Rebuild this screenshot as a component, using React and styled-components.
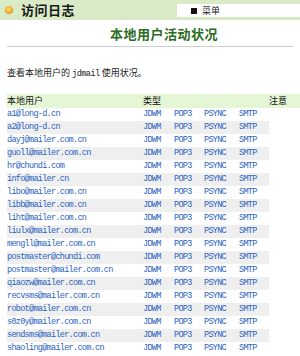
import React from 'react'
import styled, { createGlobalStyle } from 'styled-components'

const users = [
  'a1@long-d.cn',
  'a2@long-d.cn',
  'dayj@mailer.com.cn',
  'guoll@mailer.com.cn',
  'hr@chundi.com',
  'info@mailer.cn',
  'libo@mailer.com.cn',
  'libb@mailer.com.cn',
  'liht@mailer.com.cn',
  'liulx@mailer.com.cn',
  'mengll@mailer.com.cn',
  'postmaster@chundi.com',
  'postmaster@mailer.com.cn',
  'qiaozw@mailer.com.cn',
  'recvsms@mailer.com.cn',
  'robot@mailer.com.cn',
  's0z0y@mailer.com.cn',
  'sendsms@mailer.com.cn',
  'shaoling@mailer.com.cn',
]

const types = ['JDWM', 'POP3', 'PSYNC', 'SMTP']

const App = () => {
  return (
    <>
      <GlobalStyle />
      <TopBar>
        <Brand>
          <Dot />
          访问日志
        </Brand>
        <MenuBox>
          <Square />
          菜单
        </MenuBox>
      </TopBar>

      <Content>
        <Title>本地用户活动状况</Title>
        <Intro>
          查看本地用户的 <Mono>jdmail</Mono> 使用状况。
        </Intro>

        <Table>
          <colgroup>
            <col style={{ width: 136 }} />
            <col style={{ width: 31 }} />
            <col style={{ width: 30 }} />
            <col style={{ width: 35 }} />
            <col style={{ width: 30 }} />
            <col />
          </colgroup>
          <thead>
            <HeadRow>
              <Th>本地用户</Th>
              <Th colSpan={4}>类型</Th>
              <Th>注意</Th>
            </HeadRow>
          </thead>
          <tbody>
            {users.map((u, i) => (
              <Row key={u} $odd={i % 2 === 1}>
                <Cell><Link>{u}</Link></Cell>
                {types.map((t) => (
                  <Cell key={t}><Link>{t}</Link></Cell>
                ))}
                <NoteCell />
              </Row>
            ))}
          </tbody>
        </Table>
      </Content>
    </>
  )
}

export default App


// STYLES ––––––––––––––––––––––––– //

const GlobalStyle = createGlobalStyle`
  html, body {
    margin: 0;
    padding: 0;
    background: #ffffff;
    overflow: hidden;
  }
  body {
    font-family: "Noto Sans CJK SC", "DejaVu Sans", sans-serif;
    font-size: 9px;
    color: #111;
  }
`

const TopBar = styled.div`
  height: 20px;
  background: #d9ebc6;
  display: flex;
  align-items: center;
  justify-content: space-between;
`

const Brand = styled.div`
  display: flex;
  align-items: center;
  gap: 8px;
  padding-left: 5px;
  font-size: 13px;
  line-height: 16px;
  font-weight: 700;
  letter-spacing: 0.5px;
  color: #1a1a1a;
`

const Dot = styled.span`
  width: 8px;
  height: 8px;
  border-radius: 50%;
  background: radial-gradient(circle at 45% 40%, #ffe58a 0, #f7b231 45%, #e0661c 100%);
`

const MenuBox = styled.div`
  width: 109px;
  height: 13px;
  margin-top: 1px;
  background: #ffffff;
  display: flex;
  align-items: center;
  gap: 5px;
  padding-left: 14px;
  font-size: 9px;
  line-height: 13px;
  color: #222;
`

const Square = styled.span`
  width: 6px;
  height: 6px;
  background: #111;
`

const Content = styled.div`
  padding: 0 0 0 7px;
`

const Title = styled.div`
  margin: 6px 7px 0 0;
  padding: 0 0 5px 103px;
  height: 21px;
  box-sizing: border-box;
  border-bottom: 1px solid #cfcfcf;
  font-size: 13px;
  line-height: 16px;
  font-weight: 700;
  letter-spacing: 0.5px;
  color: #2b6d1f;
`

const Intro = styled.p`
  margin: 20px 0 0 0;
  font-size: 9px;
  line-height: 12px;
  color: #222;
`

const Mono = styled.span`
  font-family: "Liberation Mono", monospace;
  font-size: 8.5px;
  letter-spacing: -0.5px;
`

const Table = styled.table`
  margin-top: 14px;
  width: 293px;
  border-collapse: collapse;
  table-layout: fixed;
  font-size: 9px;
  line-height: 13px;
`

const HeadRow = styled.tr`
  background: #e5f6d7;
`

const Th = styled.th`
  padding: 0;
  height: 14px;
  text-align: left;
  font-size: 9px;
  line-height: 14px;
  font-weight: 400;
  color: #111;
`

const Row = styled.tr`
  background: ${(p) => (p.$odd ? '#efefef' : '#ffffff')};
`

const Cell = styled.td`
  padding: 0;
  height: 13px;
  white-space: nowrap;
  overflow: hidden;
`

const NoteCell = styled.td`
  background: #ffffff;
  padding: 0;
`

const Link = styled.span`
  display: block;
  height: 13px;
  font-family: "Liberation Mono", monospace;
  font-size: 8.5px;
  line-height: 13px;
  letter-spacing: -0.7px;
  color: #2a5fbf;
`
